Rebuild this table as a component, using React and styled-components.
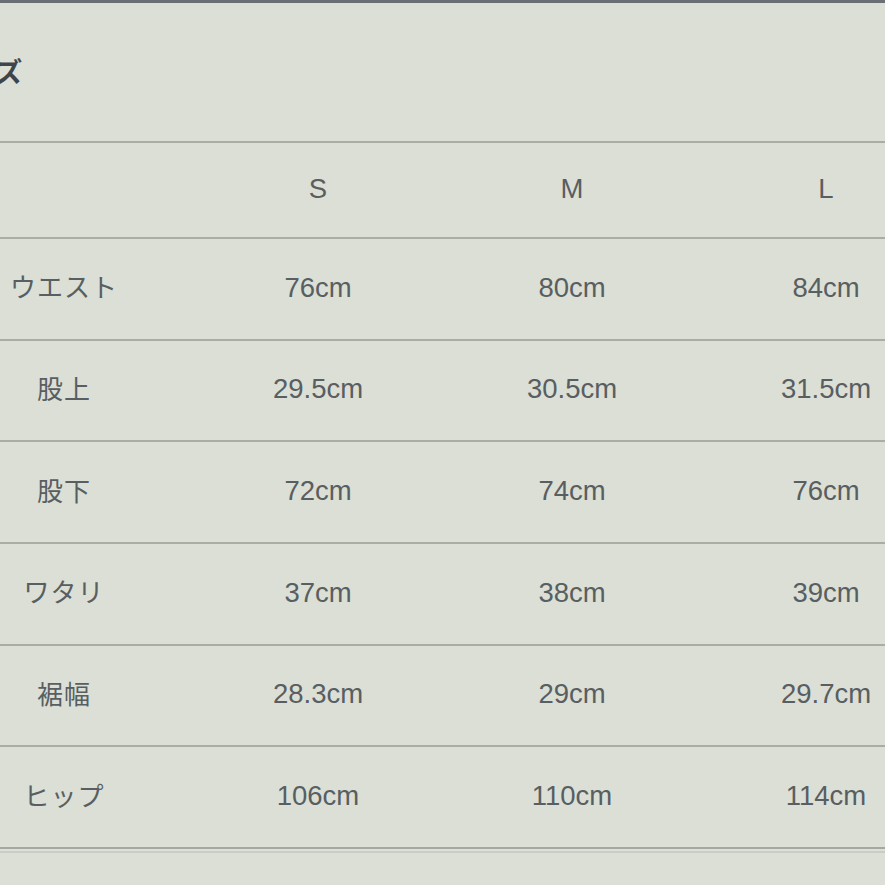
import React from "react";
import styled, { createGlobalStyle } from "styled-components";

const Global = createGlobalStyle`
  html, body { margin: 0; padding: 0; background: #dbdfd6; overflow: hidden; }
  body { font-family: "Liberation Sans", "Noto Sans CJK JP", sans-serif; }
`;

const Page = styled.div`
  width: 885px;
  height: 885px;
  overflow: hidden;
  background: #dbdfd6;
  border-top: 3px solid #6a6f76;
  box-sizing: border-box;
`;

const Shift = styled.div`
  margin-left: -63px;
  width: 1016px;
`;

const TitleBar = styled.div`
  height: 138px;
  display: flex;
  align-items: center;
  padding-left: 5px;
  box-sizing: border-box;
  padding-bottom: 4px;
`;

const Title = styled.h2`
  margin: 0;
  font-family: "Noto Sans CJK JP", sans-serif;
  font-size: 27px;
  font-weight: 700;
  color: #3e454a;
`;

const Table = styled.div`
  border-top: 2px solid #a9ada6;
  border-bottom: 2px solid #a4a8a1;
`;

const Row = styled.div`
  display: grid;
  grid-template-columns: repeat(4, 254px);
  height: ${(p) => (p.$header ? "94px" : "99.67px")};
  border-top: ${(p) => (p.$first ? "none" : "2px solid #a9ada6")};
`;

const Cell = styled.div`
  display: flex;
  align-items: center;
  justify-content: center;
  font-size: ${(p) => (p.$jp ? "26px" : "27.5px")};
  color: #585e61;
  font-family: ${(p) =>
    p.$jp ? '"Noto Sans CJK JP", sans-serif' : '"Liberation Sans", "Noto Sans CJK JP", sans-serif'};
  letter-spacing: ${(p) => (p.$jp ? "1px" : "0")};
  padding-bottom: ${(p) => (p.$jp ? "6px" : "2px")};
`;

const Under = styled.div`
  margin-top: 2px;
  height: 2px;
  background: #c9cdc5;
`;

const rows = [
  ["ウエスト", "76cm", "80cm", "84cm"],
  ["股上", "29.5cm", "30.5cm", "31.5cm"],
  ["股下", "72cm", "74cm", "76cm"],
  ["ワタリ", "37cm", "38cm", "39cm"],
  ["裾幅", "28.3cm", "29cm", "29.7cm"],
  ["ヒップ", "106cm", "110cm", "114cm"],
];

export default function App() {
  return (
    <>
      <Global />
      <Page>
        <Shift>
          <TitleBar>
            <Title>サイズ</Title>
          </TitleBar>
          <Table>
            <Row $header $first>
              <Cell />
              <Cell>S</Cell>
              <Cell>M</Cell>
              <Cell>L</Cell>
            </Row>
            {rows.map((r) => (
              <Row key={r[0]}>
                <Cell $jp>{r[0]}</Cell>
                <Cell>{r[1]}</Cell>
                <Cell>{r[2]}</Cell>
                <Cell>{r[3]}</Cell>
              </Row>
            ))}
          </Table>
          <Under />
        </Shift>
      </Page>
    </>
  );
}
